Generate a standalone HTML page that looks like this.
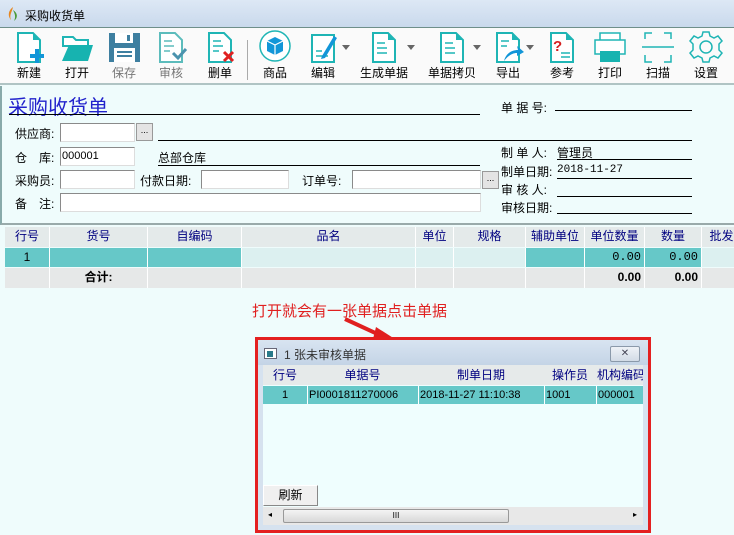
<!DOCTYPE html><html><head><meta charset="utf-8"><style>
*{margin:0;padding:0;box-sizing:border-box}
body{width:734px;height:535px;overflow:hidden;font-family:"Liberation Sans","Noto Sans CJK SC",sans-serif;font-size:12px;background:#effcfc;position:relative;color:#000}
.a{position:absolute}
.tb{left:0;top:0;width:734px;height:27px;background:linear-gradient(#dde8f5,#c9d9ec);}
.tool{left:0;top:27px;width:734px;height:58px;background:#fafafa;border-top:1px solid #6f8f8a;border-bottom:2px solid #b0c4c4}
.btn{position:absolute;top:1px;width:48px;text-align:center;font-size:12px}
.btn svg{display:block;margin:0 auto}
.btn span{display:block;margin-top:-1px}
.form{left:0;top:86px;width:734px;height:139px;background:#effcfc;border-left:2px solid #8aa;border-bottom:2px solid #9aa}
.in{position:absolute;height:19px;background:#fff;border:1px solid #8a8a8a;border-right-color:#ddd;border-bottom-color:#ddd;font-size:11px;padding-left:1px;line-height:17px}
.db{position:absolute;width:17px;height:18px;background:#e4e4e4;border:1px solid #999;font-size:9px;text-align:center;line-height:12px}
.ln{position:absolute;height:1px;background:#000}
.lb{position:absolute;font-size:12px}
.row{position:absolute;left:5px;height:20px}
.c{position:absolute;top:0;height:100%;border-right:1px solid #fff;text-align:center;line-height:19px}
</style></head><body>
<div class="a tb"><svg class="a" style="left:6px;top:6px" width="14" height="16"><path d="M7 1C3 4 1 9 5 14 3 9 6 6 7 1z" fill="#e7861e"/><path d="M7 4c5 3 5 8 1 11 2-4 1-7-1-11z" fill="#4b9a3a"/></svg><span class="a" style="left:25px;top:7px;font-size:12px">采购收货单</span></div>
<div class="a tool">
<div class="btn" style="left:5px"><svg width="36" height="36"><path d="M7 4h15l7 7v22H7z" fill="#fff" stroke="#1fb5b5" stroke-width="2"/><path d="M22 4v7h7" fill="#1fb5b5"/><path d="M26 20v14M19 27h14" stroke="#1296d8" stroke-width="4"/></svg><span>新建</span></div>
<div class="btn" style="left:53px"><svg width="36" height="36"><path d="M4 8h10l3 3h12v6H4z" fill="#fff" stroke="#1fb5b5" stroke-width="2"/><path d="M10 16h24l-5 16H3z" fill="#17b3b0"/></svg><span>打开</span></div>
<div class="btn" style="left:100px;color:#777"><svg width="36" height="36"><rect x="3" y="4" width="31" height="29" fill="#3e7fa0"/><rect x="9" y="4" width="18" height="10" fill="#fff"/><rect x="21" y="6" width="3" height="6" fill="#3e7fa0"/><rect x="8" y="19" width="21" height="14" fill="#fff"/><path d="M11 23h15M11 27h15" stroke="#3e7fa0" stroke-width="2"/></svg><span>保存</span></div>
<div class="btn" style="left:147px;color:#777"><svg width="36" height="36"><path d="M7 4h15l7 7v22H7z" fill="#fff" stroke="#5cbcbc" stroke-width="2"/><path d="M11 12h8M11 17h10M11 22h6" stroke="#5cbcbc" stroke-width="1.5"/><path d="M20 24l5 5 8-9" fill="none" stroke="#4b93ae" stroke-width="3"/></svg><span>审核</span></div>
<div class="btn" style="left:196px"><svg width="36" height="36"><path d="M7 4h15l7 7v22H7z" fill="#fff" stroke="#1fb5b5" stroke-width="2"/><path d="M11 12h8M11 17h10M11 22h6" stroke="#1fb5b5" stroke-width="1.5"/><path d="M22 23l9 9M31 23l-9 9" stroke="#e02020" stroke-width="3"/></svg><span>删单</span></div>
<div class="a" style="left:247px;top:12px;width:1px;height:40px;background:#aaa"></div>
<div class="btn" style="left:251px"><svg width="36" height="36"><circle cx="18" cy="17" r="15" fill="#fff" stroke="#1fb5b5" stroke-width="1.5"/><path d="M10 12l8-4 8 4v10l-8 4-8-4z" fill="#1296d8"/><path d="M10 12l8 4 8-4M18 16v10" stroke="#fff" stroke-width="1.2" fill="none"/></svg><span>商品</span></div>
<div class="btn" style="left:299px"><svg width="36" height="36"><path d="M7 6h22v27H7z" fill="#fff" stroke="#1fb5b5" stroke-width="2"/><path d="M11 22h6M11 27h12" stroke="#1fb5b5" stroke-width="1.5"/><path d="M17 27l12-20 3 2-12 20-4 1z" fill="#1296d8"/></svg><span>编辑</span></div>
<div class="a" style="left:342px;top:17px;border:4px solid transparent;border-top:5px solid #666"></div>
<div class="btn" style="left:355px;width:58px"><svg width="36" height="36"><path d="M7 4h15l7 7v22H7z" fill="#fff" stroke="#1fb5b5" stroke-width="2"/><path d="M22 4v7h7" fill="#1fb5b5"/><path d="M11 14h8M11 19h10M11 24h10" stroke="#1fb5b5" stroke-width="1.5"/></svg><span>生成单据</span></div>
<div class="a" style="left:407px;top:17px;border:4px solid transparent;border-top:5px solid #666"></div>
<div class="btn" style="left:422px;width:60px"><svg width="36" height="36"><path d="M7 4h15l7 7v22H7z" fill="#fff" stroke="#1fb5b5" stroke-width="2"/><path d="M22 4v7h7" fill="#1fb5b5"/><path d="M11 14h8M11 19h10M11 24h10" stroke="#1fb5b5" stroke-width="1.5"/></svg><span>单据拷贝</span></div>
<div class="a" style="left:473px;top:17px;border:4px solid transparent;border-top:5px solid #666"></div>
<div class="btn" style="left:484px"><svg width="36" height="36"><path d="M7 4h15l7 7v22H7z" fill="#fff" stroke="#1fb5b5" stroke-width="2"/><path d="M22 4v7h7" fill="#1fb5b5"/><path d="M11 12h8M11 17h6" stroke="#1fb5b5" stroke-width="1.5"/><path d="M14 32c2-8 8-11 14-11l-1-4 7 6-7 4v-3c-5 0-9 3-13 8z" fill="#1296d8"/></svg><span>导出</span></div>
<div class="a" style="left:526px;top:17px;border:4px solid transparent;border-top:5px solid #666"></div>
<div class="btn" style="left:538px"><svg width="36" height="36"><path d="M7 4h15l7 7v22H7z" fill="#fff" stroke="#1fb5b5" stroke-width="2"/><path d="M22 4v7h7" fill="#1fb5b5"/><text x="9" y="22" font-size="15" font-weight="bold" fill="#d42020" font-family="Liberation Sans">?</text><path d="M17 24h9M17 28h9" stroke="#1fb5b5" stroke-width="1.5"/></svg><span>参考</span></div>
<div class="btn" style="left:586px"><svg width="36" height="36"><rect x="8" y="4" width="20" height="8" fill="#fff" stroke="#1fb5b5" stroke-width="1.5"/><rect x="3" y="11" width="30" height="14" fill="#fff" stroke="#1fb5b5" stroke-width="1.5"/><rect x="8" y="22" width="20" height="11" fill="#17b3b0"/></svg><span>打印</span></div>
<div class="btn" style="left:634px"><svg width="36" height="36"><path d="M5 10V4h7M24 4h7v6M31 26v7h-7M12 33H5v-7" fill="none" stroke="#1fb5b5" stroke-width="1.5"/><path d="M2 18h32" stroke="#1fb5b5" stroke-width="1.5"/></svg><span>扫描</span></div>
<div class="btn" style="left:682px"><svg width="36" height="36"><circle cx="18" cy="18" r="6" fill="none" stroke="#1fb5b5" stroke-width="1.5"/><path d="M15 3h6l1 4 4 2 4-2 4 5-3 3v6l3 3-4 5-4-2-4 2-1 4h-6l-1-4-4-2-4 2-4-5 3-3v-6l-3-3 4-5 4 2 4-2z" fill="none" stroke="#1fb5b5" stroke-width="1.5"/></svg><span>设置</span></div>
</div>
<div class="a form">
<span class="lb" style="left:6px;top:5px;font-size:20px;color:#2222cc">采购收货单</span>
<div class="ln" style="left:7px;top:28px;width:471px"></div>
<span class="lb" style="left:13px;top:39px">供应商:</span><div class="in" style="left:58px;top:37px;width:75px"></div><div class="db" style="left:134px;top:37px">...</div>
<div class="ln" style="left:156px;top:54px;width:534px"></div>
<span class="lb" style="left:13px;top:63px">仓　库:</span><div class="in" style="left:58px;top:61px;width:75px">000001</div>
<span class="lb" style="left:156px;top:63px">总部仓库</span><div class="ln" style="left:156px;top:79px;width:322px"></div>
<span class="lb" style="left:13px;top:86px">采购员:</span><div class="in" style="left:58px;top:84px;width:75px"></div>
<span class="lb" style="left:138px;top:86px">付款日期:</span><div class="in" style="left:199px;top:84px;width:88px"></div>
<span class="lb" style="left:300px;top:86px">订单号:</span><div class="in" style="left:350px;top:84px;width:129px"></div><div class="db" style="left:480px;top:85px">...</div>
<span class="lb" style="left:13px;top:109px">备　注:</span><div class="in" style="left:58px;top:107px;width:421px"></div>
<span class="lb" style="left:499px;top:13px">单 据 号:</span><div class="ln" style="left:553px;top:24px;width:137px"></div>
<div class="ln" style="left:480px;top:54px;width:210px"></div>
<span class="lb" style="left:499px;top:58px">制 单 人:</span><span class="lb" style="left:555px;top:58px">管理员</span><div class="ln" style="left:555px;top:73px;width:135px"></div>
<span class="lb" style="left:499px;top:77px">制单日期:</span><span class="lb" style="left:555px;top:78px;font-size:11px;font-family:'Liberation Mono',monospace">2018-11-27</span><div class="ln" style="left:555px;top:92px;width:135px"></div>
<span class="lb" style="left:499px;top:95px">审 核 人:</span><div class="ln" style="left:555px;top:110px;width:135px"></div>
<span class="lb" style="left:499px;top:113px">审核日期:</span><div class="ln" style="left:555px;top:127px;width:135px"></div>
</div>
<div class="row" style="top:227px;width:729px;background:#e4eaea;color:#000080">
<div class="c" style="left:0;width:45px">行号</div><div class="c" style="left:45px;width:98px">货号</div><div class="c" style="left:143px;width:94px">自编码</div><div class="c" style="left:237px;width:174px">品名</div><div class="c" style="left:411px;width:38px">单位</div><div class="c" style="left:449px;width:72px">规格</div><div class="c" style="left:521px;width:59px">辅助单位</div><div class="c" style="left:580px;width:60px">单位数量</div><div class="c" style="left:640px;width:57px">数量</div><div class="c" style="left:697px;width:40px">批发</div></div>
<div class="row" style="top:248px;width:729px;height:19px;background:#dcf0f0">
<div class="c" style="left:0;width:45px;background:#66c8c8">1</div><div class="c" style="left:45px;width:98px;background:#66c8c8"></div><div class="c" style="left:143px;width:94px;background:#66c8c8"></div><div class="c" style="left:237px;width:174px"></div><div class="c" style="left:411px;width:38px"></div><div class="c" style="left:449px;width:72px"></div><div class="c" style="left:521px;width:59px;background:#66c8c8"></div><div class="c" style="left:580px;width:60px;background:#66c8c8;text-align:right;padding-right:3px;font-family:'Liberation Mono',monospace">0.00</div><div class="c" style="left:640px;width:57px;background:#66c8c8;text-align:right;padding-right:3px;font-family:'Liberation Mono',monospace">0.00</div></div>
<div class="row" style="top:268px;width:729px;background:#e6e8e8;font-weight:bold">
<div class="c" style="left:0;width:45px"></div><div class="c" style="left:45px;width:98px">合计:</div><div class="c" style="left:143px;width:94px"></div><div class="c" style="left:237px;width:174px"></div><div class="c" style="left:411px;width:38px"></div><div class="c" style="left:449px;width:72px"></div><div class="c" style="left:521px;width:59px"></div><div class="c" style="left:580px;width:60px;text-align:right;padding-right:3px">0.00</div><div class="c" style="left:640px;width:57px;text-align:right;padding-right:3px">0.00</div></div>
<span class="a" style="left:252px;top:300px;font-size:15px;color:#e02020">打开就会有一张单据点击单据</span>
<svg class="a" style="left:340px;top:316px" width="70" height="32"><path d="M5 3L44 21" stroke="#e02020" stroke-width="4"/><path d="M36 11L58 25 32 27z" fill="#e02020"/></svg>
<div class="a" style="left:255px;top:337px;width:396px;height:196px;border:3px solid #e42020;background:#d6e2ef">
<div class="a" style="left:0;top:0;width:390px;height:25px;background:linear-gradient(#d8e4f1,#c4d4e6)"></div>
<div class="a" style="left:6px;top:8px;width:13px;height:11px;border:1px solid #667;background:#fff"><div style="width:6px;height:6px;margin:2px;background:#2a7a8a"></div></div>
<span class="a" style="left:26px;top:6px;font-size:12px;color:#333">1 张未审核单据</span>
<div class="a" style="left:352px;top:6px;width:30px;height:16px;border:1px solid #8a99aa;border-radius:2px;background:linear-gradient(#eef2f7,#d2dbe6);text-align:center;font-size:10px;line-height:14px;color:#445">✕</div>
<div class="a" style="left:5px;top:25px;width:380px;height:160px;background:#effefe;overflow:hidden">
<div class="a" style="left:0;top:0;width:380px;height:20px;background:#e6eaea;color:#000080;font-size:12px;line-height:20px">
<span class="a" style="left:0;width:44px;text-align:center">行号</span><span class="a" style="left:44px;width:111px;text-align:center">单据号</span><span class="a" style="left:155px;width:126px;text-align:center">制单日期</span><span class="a" style="left:281px;width:52px;text-align:center">操作员</span><span class="a" style="left:333px;width:50px;text-align:center;white-space:nowrap">机构编码</span></div>
<div class="a" style="left:0;top:21px;width:380px;height:18px;background:#66c8c8;font-size:11px;line-height:18px">
<span class="a" style="left:0;width:44px;text-align:center">1</span><span class="a" style="left:46px">PI0001811270006</span><span class="a" style="left:157px">2018-11-27 11:10:38</span><span class="a" style="left:283px">1001</span><span class="a" style="left:335px">000001</span>
<div class="a" style="left:44px;top:0;width:1px;height:18px;background:#fff"></div><div class="a" style="left:155px;top:0;width:1px;height:18px;background:#fff"></div><div class="a" style="left:281px;top:0;width:1px;height:18px;background:#fff"></div><div class="a" style="left:333px;top:0;width:1px;height:18px;background:#fff"></div></div>
<div class="a" style="left:0;top:120px;width:55px;height:21px;background:#f0f0f0;border:1px solid #888;border-top-color:#fff;border-left-color:#fff;text-align:center;line-height:19px">刷新</div>
<div class="a" style="left:0;top:142px;width:380px;height:18px;background:#e8e8e8">
<div class="a" style="left:20px;top:2px;width:226px;height:14px;border:1px solid #999;border-radius:2px;background:linear-gradient(#f4f4f4,#d8d8d8);text-align:center;font-size:8px;line-height:12px">III</div>
<span class="a" style="left:5px;top:3px;font-size:8px">◂</span><span class="a" style="left:370px;top:3px;font-size:8px">▸</span></div>
</div></div>
</body></html>
